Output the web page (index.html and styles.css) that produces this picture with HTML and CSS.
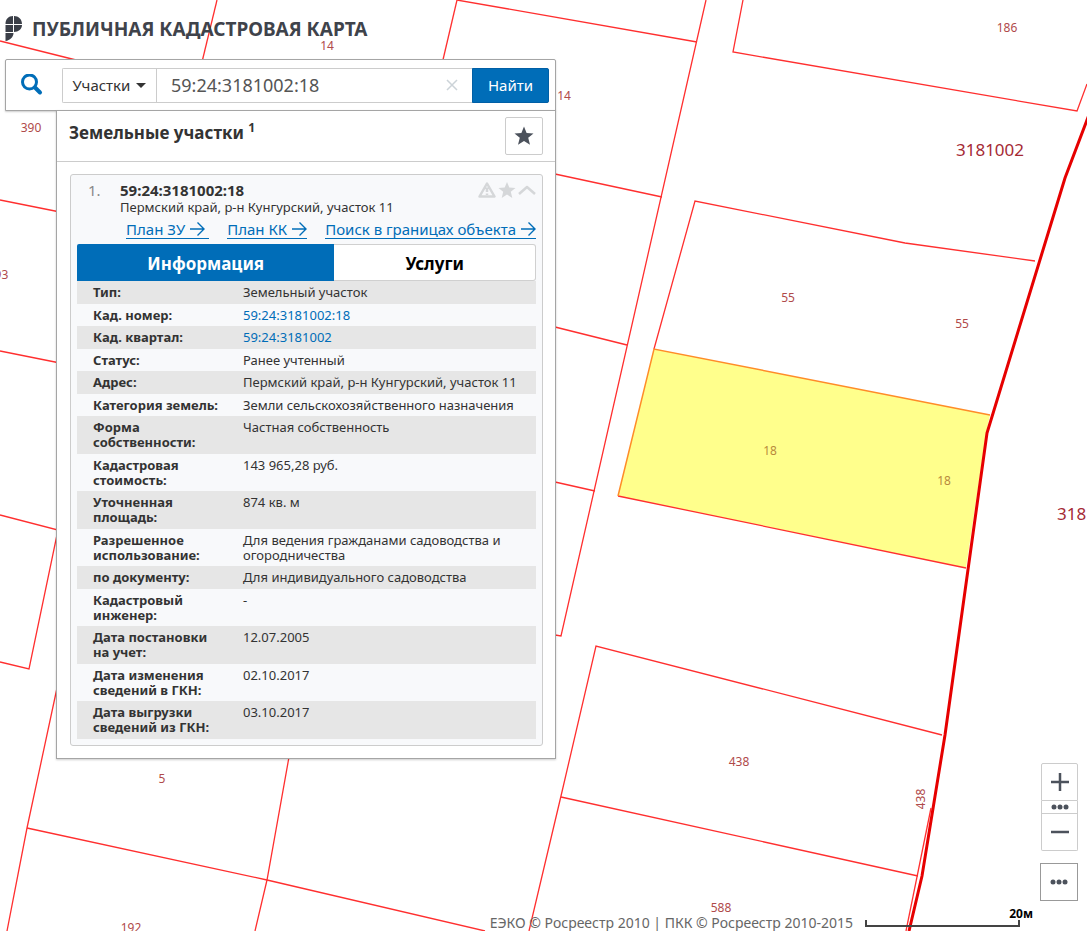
FILE: index.html
```html
<!DOCTYPE html>
<html lang="ru">
<head>
<meta charset="utf-8">
<meta name="viewport" content="width=device-width, initial-scale=1">
<title>Публичная кадастровая карта</title>
<link rel="stylesheet" href="styles.css">
</head>
<body>
<div class="app">
  <svg class="map" viewBox="0 0 1087 931" preserveAspectRatio="xMinYMin slice" role="img" aria-label="Карта участков">
    <polygon class="selected" points="654,349 990,415 986,434 966,568 618,496"/>
    <g class="plots">
      <path d="M0 41 L80 61"/>
      <path d="M217 0 L202 62"/>
      <path d="M457 0 L442 64"/>
      <path d="M457 0 L697 42"/>
      <path d="M706 0 L561 636 L555 635"/>
      <path d="M743 0 L733 52 L1077 111 L1087 84"/>
      <path d="M555 174 L662 197"/>
      <path d="M555 327 L627 345"/>
      <path d="M555 482 L595 491"/>
      <path d="M654 349 L695 201 L905 243 L1035 261"/>
      <path d="M618 496 L966 568"/>
      <path d="M0 200 L60 212"/>
      <path d="M0 351 L60 363"/>
      <path d="M0 515 L58 530 L29 669 L0 662"/>
      <path d="M57 688 L27 828 L7 931"/>
      <path d="M289 757 L267 880 L255 931"/>
      <path d="M27 828 L267 880 L485 931"/>
      <path d="M942 735 L596 646 L561 796 L529 931"/>
      <path d="M561 797 L918 876"/>
      <path d="M931 808 L906 931"/>
    </g>
    <path class="selected-edge" d="M618 496 L654 349 L990 415"/>
    <path class="quarter" d="M1090 112 L1065 178 L987 433 L945 735 L922 876 L909 931"/>
    <g class="plot-numbers">
      <text x="327" y="50">14</text>
      <text x="564" y="100">14</text>
      <text x="1007" y="32">186</text>
      <text x="31" y="132">390</text>
      <text x="-2" y="279">393</text>
      <text x="788" y="302">55</text>
      <text x="962" y="328">55</text>
      <text class="on-selected" x="770" y="455">18</text>
      <text class="on-selected" x="944" y="485">18</text>
      <text x="162" y="783">5</text>
      <text x="739" y="766">438</text>
      <text x="721" y="912">588</text>
      <text x="131" y="932">192</text>
      <text transform="translate(925 799) rotate(-90)">438</text>
    </g>
    <g class="quarter-numbers">
      <text x="990" y="156">3181002</text>
      <text x="1091" y="520">3181002</text>
    </g>
  </svg>

  <header class="header">
    <svg class="logo" viewBox="0 0 17 25" aria-hidden="true">
      <path d="M8 0V8H0.500C0.500 3 3.500 0 8 0zM9 0C13.500 0 17 3 17 8H9zM0.500 9H8V16H0.500zM9 9H17C17 13 13.500 16 9 16zM0.500 17H8.500C8.500 21 5 24.500 0.500 25z"/>
    </svg>
    <h1 class="title">ПУБЛИЧНАЯ КАДАСТРОВАЯ КАРТА</h1>
  </header>

  <main class="main">
    <form class="search">
      <svg class="search-icon" viewBox="0 0 22 22" aria-hidden="true">
        <circle cx="8.500" cy="8" r="7"/>
        <path d="M14 13.500 L19 18.500"/>
      </svg>
      <div class="search-group">
        <button class="kind" type="button">Участки <span class="caret"></span></button>
        <input class="query" type="text" value="59:24:3181002:18" aria-label="Кадастровый номер">
        <button class="clear" type="button" aria-label="Очистить">
          <svg viewBox="0 0 12 12"><path d="M1 1 L11 11 M11 1 L1 11"/></svg>
        </button>
        <button class="find" type="submit">Найти</button>
      </div>
    </form>

    <section class="panel">
      <div class="panel-head">
        <h2 class="panel-title">Земельные участки <sup>1</sup></h2>
        <button class="favorites" type="button" aria-label="Избранное">
          <svg viewBox="0 0 20 20"><path d="M10 0.500 L12.600 7 L19.500 7.400 L14.200 11.800 L16 18.700 L10 15 L4 18.700 L5.800 11.800 L.5 7.400 L7.400 7z"/></svg>
        </button>
      </div>
      <article class="card">
        <div class="card-head">
          <span class="index">1.</span>
          <div class="names">
            <h3 class="number">59:24:3181002:18</h3>
            <p class="address">Пермский край, р-н Кунгурский, участок 11</p>
          </div>
          <svg class="tools" viewBox="0 0 58 16" aria-hidden="true">
            <path class="line" d="M9 1.500 L16.500 14.500 H1.500z M9 5.500 V10 M9 11.500 V13"/>
            <path class="fill" d="M29 0 L31.300 5.500 L37.500 5.900 L32.800 9.800 L34.300 16 L29 12.600 L23.700 16 L25.200 9.800 L20.500 5.900 L26.700 5.500z"/>
            <path class="line" d="M41 12 L49 5 L57 12"/>
          </svg>
        </div>
        <nav class="links">
          <a class="spaced" href="#plan">План ЗУ <svg viewBox="0 0 15 14" aria-hidden="true"><path d="M0 7 H14 M7.500 0.500 L14 7 L7.500 13.500"/></svg></a>
          <a href="#quarter">План КК <svg viewBox="0 0 15 14" aria-hidden="true"><path d="M0 7 H14 M7.500 0.500 L14 7 L7.500 13.500"/></svg></a>
          <a href="#within">Поиск в границах объекта <svg viewBox="0 0 15 14" aria-hidden="true"><path d="M0 7 H14 M7.500 0.500 L14 7 L7.500 13.500"/></svg></a>
        </nav>
        <div class="tabs">
          <button class="tab active" type="button">Информация</button>
          <button class="tab" type="button">Услуги</button>
        </div>
        <table class="info">
          <tbody>
            <tr><th scope="row">Тип:</th><td>Земельный участок</td></tr>
            <tr><th scope="row">Кад. номер:</th><td><a href="#number">59:24:3181002:18</a></td></tr>
            <tr><th scope="row">Кад. квартал:</th><td><a href="#block">59:24:3181002</a></td></tr>
            <tr><th scope="row">Статус:</th><td>Ранее учтенный</td></tr>
            <tr><th scope="row">Адрес:</th><td>Пермский край, р-н Кунгурский, участок 11</td></tr>
            <tr><th scope="row">Категория земель:</th><td>Земли сельскохозяйственного назначения</td></tr>
            <tr><th scope="row">Форма собственности:</th><td>Частная собственность</td></tr>
            <tr><th scope="row">Кадастровая стоимость:</th><td>143 965,28 руб.</td></tr>
            <tr><th scope="row">Уточненная площадь:</th><td>874 кв. м</td></tr>
            <tr><th scope="row">Разрешенное использование:</th><td>Для ведения гражданами садоводства и огородничества</td></tr>
            <tr><th scope="row">по документу:</th><td>Для индивидуального садоводства</td></tr>
            <tr><th scope="row">Кадастровый инженер:</th><td>-</td></tr>
            <tr><th scope="row">Дата постановки<br>на учет:</th><td>12.07.2005</td></tr>
            <tr><th scope="row">Дата изменения<br>сведений в ГКН:</th><td>02.10.2017</td></tr>
            <tr><th scope="row">Дата выгрузки<br>сведений из ГКН:</th><td>03.10.2017</td></tr>
          </tbody>
        </table>
      </article>
    </section>
  </main>

  <div class="controls">
    <div class="zoom">
      <button type="button" aria-label="Приблизить"><svg viewBox="0 0 18 18"><path d="M0 9 H18 M9 0 V18"/></svg></button>
      <button class="levels" type="button" aria-label="Уровни"><svg viewBox="0 0 18 6"><circle cx="3" cy="3" r="2.500"/><circle cx="9" cy="3" r="2.500"/><circle cx="15" cy="3" r="2.500"/></svg></button>
      <button type="button" aria-label="Отдалить"><svg viewBox="0 0 18 18"><path d="M0 9 H18"/></svg></button>
    </div>
    <button class="more" type="button" aria-label="Ещё"><svg viewBox="0 0 18 6"><circle cx="3" cy="3" r="2.500"/><circle cx="9" cy="3" r="2.500"/><circle cx="15" cy="3" r="2.500"/></svg></button>
  </div>

  <footer class="footer">
    <span class="copyright">ЕЭКО © Росреестр 2010 | ПКК © Росреестр 2010-2015</span>
    <div class="scale"><span class="scale-label">20м</span><div class="scale-bar"></div></div>
  </footer>
</div>
</body>
</html>
```
FILE: styles.css
```css
* { box-sizing: border-box; }

body {
  margin: 0;
  color: #333;
  font: 13px/15px "Noto Sans", "Open Sans", sans-serif;
}

h1, h2, h3, p { margin: 0; }
button, input { font: inherit; }
button { cursor: pointer; }
a { color: #006db8; text-decoration: none; }
svg { display: block; }

.app {
  position: relative;
  min-height: 100vh;
  overflow: hidden;
}

/* Map canvas */
.map {
  position: absolute;
  inset: 0;
  width: 100%;
  height: 100%;
}
.plots { fill: none; stroke: #ff2f2f; stroke-width: 1.3; }
.selected { fill: #ffff8c; }
.selected-edge { fill: none; stroke: #ff8c28; stroke-width: 1.5; }
.quarter { fill: none; stroke: #e60000; stroke-width: 3; }
.plot-numbers { fill: #b04a4a; font-size: 12px; text-anchor: middle; }
.plot-numbers .on-selected { fill: #b98a3c; }
.quarter-numbers { fill: #a52a35; font-size: 17px; text-anchor: middle; }

/* Header */
.header {
  position: relative;
  display: flex;
  align-items: center;
  gap: 10px;
  height: 59px;
  padding: 0 5px 2px;
}
.logo { width: 17px; height: 25px; fill: #3b3f48; }
.title {
  color: #3f434b;
  font-size: 19px;
  line-height: 24px;
}

/* Search */
.main {
  position: relative;
  width: 100%;
  max-width: 556px;
  padding-left: 5px;
}
.search {
  display: flex;
  align-items: center;
  height: 52px;
  padding: 0 6px 0 15px;
  background: #fff;
  border: 1px solid #a5a5a5;
  border-radius: 2px 2px 0 0;
  box-shadow: 0 1px 2px rgba(0, 0, 0, .2);
}
.search-icon {
  flex: none;
  width: 22px;
  height: 22px;
  margin-right: 19px;
  fill: none;
  stroke: #006db8;
  stroke-width: 3;
  stroke-linecap: round;
}
.search-icon path { stroke-width: 4; }
.search-group {
  display: flex;
  flex: 1;
  min-width: 0;
  height: 35px;
  border: 1px solid #ccc;
  border-right: 0;
  border-radius: 2px;
}
.kind {
  display: flex;
  flex: none;
  align-items: center;
  justify-content: center;
  gap: 6px;
  width: 94px;
  padding: 0;
  background: #fff;
  border: 0;
  border-right: 1px solid #ccc;
  color: #333;
  font-size: 15px;
}
.caret {
  border: 5px solid transparent;
  border-top-color: #333;
  border-bottom: 0;
}
.query {
  flex: 1;
  min-width: 0;
  padding: 0 14px;
  border: 0;
  color: #555;
  font-size: 18px;
}
.clear {
  padding: 0 14px;
  background: none;
  border: 0;
}
.clear svg { width: 12px; height: 12px; stroke: #ccd3d8; stroke-width: 1.5; }
.find {
  flex: none;
  width: 77px;
  margin: -1px 0;
  padding: 0;
  background: #006db8;
  border: 1px solid #005fa6;
  border-radius: 0 2px 2px 0;
  color: #fff;
  font-size: 15px;
}

/* Results panel */
.panel {
  position: relative;
  margin: -1px 0 0 51px;
  padding-bottom: 12px;
  background: #fff;
  border: 1px solid #a5a5a5;
  box-shadow: 0 1px 2px rgba(0, 0, 0, .2);
}
.panel-head {
  display: flex;
  justify-content: space-between;
  height: 51px;
  padding: 6px 12px;
  border-bottom: 1px solid #ccc;
}
.panel-title { font-size: 17px; line-height: 32px; }
.panel-title sup { font-size: 12px; line-height: 1; }
.favorites {
  display: grid;
  place-items: center;
  width: 38px;
  height: 38px;
  padding: 0;
  background: #fff;
  border: 1px solid #ccc;
  border-radius: 2px;
}
.favorites svg { width: 20px; height: 20px; fill: #4c525c; }

.card {
  margin: 12px 12px 0 13px;
  padding: 0 6px 6px;
  background: #f8f9fb;
  border: 1px solid #ccc;
  border-radius: 3px;
}
.card-head { display: flex; padding-top: 6px; }
.index { width: 43px; padding-left: 11px; color: #888; font-size: 15px; line-height: 18px; }
.names { flex: 1; }
.number { font-size: 15px; line-height: 18px; }
.address { line-height: 17px; }
.tools { width: 58px; height: 16px; margin-top: 1px; stroke-linejoin: round; }
.tools .line { fill: none; stroke: #d5d7d9; stroke-width: 2.5; }
.tools .fill { fill: #d5d7d9; }

.links {
  display: flex;
  justify-content: space-between;
  height: 28px;
  padding: 4px 0 0 49px;
  font-size: 15px;
  line-height: 19px;
}
.links a {
  display: flex;
  align-items: center;
  gap: 5px;
  height: 19px;
  border-bottom: 1px solid;
}
.links .spaced { padding-right: 4px; }
.links svg { width: 15px; height: 14px; fill: none; stroke: #006db8; stroke-width: 1.4; }

.tabs { display: flex; height: 37px; }
.tab {
  flex: 201;
  padding: 2px 0 0;
  background: #fff;
  border: 1px solid #d0d0d0;
  border-left: 0;
  border-radius: 0 3px 3px 0;
  color: #000;
  font-size: 17px;
  font-weight: 700;
}
.tab.active {
  flex: 258;
  background: #006db8;
  border: 0;
  border-radius: 2px 0 0 0;
  color: #fff;
}

.info { width: 100%; border-collapse: collapse; table-layout: fixed; }
.info th, .info td { padding: 4px 0 3px; text-align: left; vertical-align: top; }
.info th { width: 166px; padding-left: 16px; padding-right: 24px; }
.info tr:nth-child(odd) { background: #e6e6e6; }
.info tr:nth-child(odd) > * { padding-bottom: 4px; }

/* Map controls */
.controls {
  position: absolute;
  right: 9px;
  bottom: 30px;
  display: grid;
  justify-items: end;
  gap: 12px;
}
.controls button {
  display: grid;
  place-items: center;
  width: 37px;
  height: 38px;
  padding: 0;
  background: #fff;
  border: 1px solid #ccc;
}
.zoom button + button { border-top: 0; }
.zoom button:first-child { border-radius: 2px 2px 0 0; }
.zoom button:last-child { height: 37px; border-radius: 0 0 2px 2px; }
.controls .levels { height: 13px; }
.controls .more { width: 38px; border-color: #999; }
.controls svg { width: 18px; fill: #4c525c; stroke: #4c525c; stroke-width: 2.5; }
.controls circle { stroke: none; }

.footer {
  position: absolute;
  right: 54px;
  bottom: 0;
  display: flex;
  align-items: flex-end;
  gap: 12px;
}
.copyright { color: #666; font-size: 14px; line-height: 16px; }
.scale {
  width: 168px;
  padding-bottom: 4px;
  color: #000;
  font-weight: 700;
  text-align: right;
}
.scale-label { display: block; font-size: 12px; line-height: 12px; }
.scale-bar {
  width: 155px;
  height: 7px;
  border: 2px solid #444;
  border-top: 0;
}
```
